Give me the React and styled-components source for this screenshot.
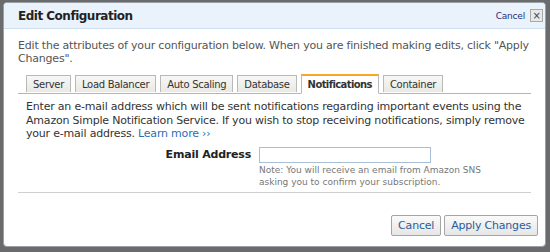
import React from "react";
import styled, { createGlobalStyle } from "styled-components";

const Global = createGlobalStyle`
  html, body {
    margin: 0;
    padding: 0;
    background: #6a6b6d;
    width: 550px;
    height: 252px;
    overflow: hidden;
  }
`;

const Dialog = styled.div`
  margin: 2px 0 0 3px;
  width: 543px;
  height: 245px;
  box-sizing: border-box;
  background: #fff;
  border: 1px solid #9aa0a6;
  border-radius: 4px;
  overflow: hidden;
  font-family: "DejaVu Sans", Verdana, sans-serif;
  font-size: 11px;
  letter-spacing: -0.2px;
  color: #333;
  display: flex;
  flex-direction: column;
`;

const Header = styled.div`
  height: 25px;
  flex: none;
  background: #eaf2fb;
  border-bottom: 1px solid #cfe0f2;
  display: flex;
  align-items: center;
  padding: 0 2px 0 14px;
`;

const Title = styled.h1`
  margin: 0;
  flex: 1;
  font-size: 12px;
  font-weight: bold;
  letter-spacing: -0.5px;
  color: #222;
`;

const HeadCancel = styled.a`
  font-size: 9px;
  letter-spacing: -0.2px;
  color: #1f2f7a;
  margin-right: 5px;
`;

const CloseBox = styled.span`
  width: 11px;
  height: 11px;
  border: 1px solid #a9a9a9;
  background: #e8e8e8;
  display: flex;
  align-items: center;
  justify-content: center;
  font-size: 10px;
  color: #444;
  line-height: 1;
`;

const Body = styled.div`
  padding: 10px 14px 0 14px;
  flex: 1;
  display: flex;
  flex-direction: column;
`;

const Intro = styled.p`
  margin: 0 0 9px 0;
  line-height: 13px;
  color: #555;
`;

const TabRow = styled.div`
  display: flex;
  gap: 4px;
  padding-left: 8px;
  border-bottom: 1px solid #b5b5b5;
  height: 19px;
`;

const Tab = styled.div`
  padding: 0 6px;
  height: ${(p) => (p.$active ? "17px" : "16px")};
  margin-top: ${(p) => (p.$active ? "0" : "1px")};
  border: 1px solid #b9b9b9;
  border-top: ${(p) => (p.$active ? "2px solid #f8a727" : "1px solid #b9b9b9")};
  border-bottom: ${(p) => (p.$active ? "1px solid #fff" : "none")};
  background: ${(p) => (p.$active ? "#fff" : "linear-gradient(#f7f7f5, #e9e8e3)")};
  font-size: 10px;
  letter-spacing: ${(p) => (p.$active ? "-0.6px" : "-0.3px")};
  font-weight: ${(p) => (p.$active ? "bold" : "normal")};
  color: #333;
  display: flex;
  align-items: center;
  white-space: nowrap;
`;

const Panel = styled.div`
  padding: 6px 0 0 8px;
  border-bottom: 1px solid #cfcfcf;
  height: 99px;
  box-sizing: border-box;
`;

const Lead = styled.p`
  margin: 0;
  line-height: 13.5px;
  color: #333;
`;

const More = styled.a`
  color: #2a6fb6;
`;

const Field = styled.div`
  display: grid;
  grid-template-columns: 225px 174px;
  column-gap: 8px;
  margin-top: 6px;
`;

const Label = styled.label`
  font-weight: bold;
  color: #222;
  text-align: right;
  padding-top: 1px;
  font-size: 11px;
`;

const Input = styled.input`
  width: 172px;
  height: 16px;
  box-sizing: border-box;
  border: 1px solid #a9bfd6;
  margin: 0;
  padding: 0;
`;

const Note = styled.div`
  grid-column: 2;
  width: 240px;
  font-size: 9px;
  letter-spacing: 0;
  color: #777;
  line-height: 12px;
  margin-top: 1px;
`;

const Footer = styled.div`
  display: flex;
  justify-content: flex-end;
  gap: 3px;
  padding-top: 22px;
  margin-right: -7px;
`;

const Button = styled.button`
  height: 21px;
  padding: 0 6px;
  border: 1px solid #a5a5a5;
  border-radius: 2px;
  background: linear-gradient(#fafafa, #e6e6e6);
  font-family: "DejaVu Sans", Verdana, sans-serif;
  font-size: 11px;
  letter-spacing: -0.2px;
  color: #2b5c99;
`;

export default function App() {
  return (
    <>
      <Global />
      <Dialog>
        <Header>
          <Title>Edit Configuration</Title>
          <HeadCancel>Cancel</HeadCancel>
          <CloseBox>×</CloseBox>
        </Header>
        <Body>
          <Intro>
            Edit the attributes of your configuration below. When you are finished making edits, click "Apply
            Changes".
          </Intro>
          <TabRow>
            <Tab>Server</Tab>
            <Tab>Load Balancer</Tab>
            <Tab>Auto Scaling</Tab>
            <Tab>Database</Tab>
            <Tab $active>Notifications</Tab>
            <Tab>Container</Tab>
          </TabRow>
          <Panel>
            <Lead>
              Enter an e-mail address which will be sent notifications regarding important events using the
              Amazon Simple Notification Service. If you wish to stop receiving notifications, simply remove
              your e-mail address. <More>Learn more ››</More>
            </Lead>
            <Field>
              <Label>Email Address</Label>
              <Input type="text" />
              <Note>
                Note: You will receive an email from Amazon SNS asking you to confirm your subscription.
              </Note>
            </Field>
          </Panel>
          <Footer>
            <Button>Cancel</Button>
            <Button>Apply Changes</Button>
          </Footer>
        </Body>
      </Dialog>
    </>
  );
}
